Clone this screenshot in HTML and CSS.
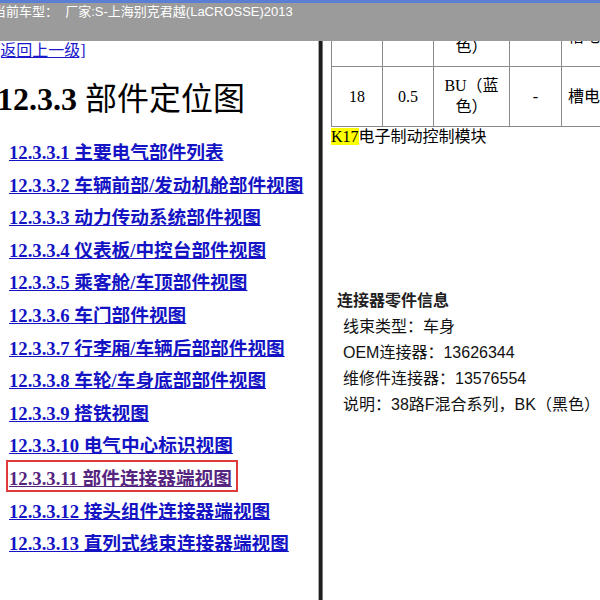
FILE: index.html
```html
<!DOCTYPE html>
<html lang="zh-CN">
<head>
  <meta charset="UTF-8">
  <title>12.3.3 部件定位图</title>
  <link rel="stylesheet" href="styles.css">
</head>
<body>

  <div class="topbar">
    <div class="model">当前车型：&nbsp;&nbsp;厂家:S-上海别克君越(LaCROSSE)2013</div>
  </div>

  <div class="main">
    <div class="left">
      <a class="back" href="#">[返回上一级]</a>
      <h1>12.3.3 <span class="cn">部件定位图</span></h1>
      <ul class="toc">
        <li><a href="#">12.3.3.1 主要电气部件列表</a></li>
        <li><a href="#">12.3.3.2 车辆前部/发动机舱部件视图</a></li>
        <li><a href="#">12.3.3.3 动力传动系统部件视图</a></li>
        <li><a href="#">12.3.3.4 仪表板/中控台部件视图</a></li>
        <li><a href="#">12.3.3.5 乘客舱/车顶部件视图</a></li>
        <li><a href="#">12.3.3.6 车门部件视图</a></li>
        <li><a href="#">12.3.3.7 行李厢/车辆后部部件视图</a></li>
        <li><a href="#">12.3.3.8 车轮/车身底部部件视图</a></li>
        <li><a href="#">12.3.3.9 搭铁视图</a></li>
        <li><a href="#">12.3.3.10 电气中心标识视图</a></li>
        <li class="current"><a href="#">12.3.3.11 部件连接器端视图</a></li>
        <li><a href="#">12.3.3.12 接头组件连接器端视图</a></li>
        <li><a href="#">12.3.3.13 直列式线束连接器端视图</a></li>
      </ul>
    </div>

    <div class="divider"></div>

    <div class="right">
      <table class="pins">
        <colgroup>
          <col class="c-num">
          <col class="c-size">
          <col class="c-color">
          <col class="c-dash">
          <col class="c-desc">
        </colgroup>
        <tr class="tall">
          <td>17</td>
          <td>0.5</td>
          <td class="bottom">BN（棕<br>色）</td>
          <td>-</td>
          <td class="desc">信号电路<br>槽电路信号</td>
        </tr>
        <tr>
          <td>18</td>
          <td>0.5</td>
          <td>BU（蓝<br>色）</td>
          <td>-</td>
          <td class="desc">槽电路信号</td>
        </tr>
      </table>
      <p class="part"><span class="hl">K17</span>电子制动控制模块</p>

      <div class="info">
        <div class="info-title">连接器零件信息</div>
        <div class="info-row">线束类型：车身</div>
        <div class="info-row">OEM连接器：13626344</div>
        <div class="info-row">维修件连接器：13576554</div>
        <div class="info-row">说明：38路F混合系列，BK（黑色）</div>
      </div>
    </div>
  </div>

</body>
</html>
```

FILE: styles.css
```css
html, body { margin: 0; height: 100%; overflow: hidden; }
body { background: #fff; font-family: "Liberation Serif", "Noto Sans CJK SC", serif; color: #000; }

.topbar { height: 38px; background: #9b9b9b; border-top: 3px solid #5a7fd5; overflow: hidden; }
.model { margin-left: -7px; padding-top: 1px; font: 13px/16px "Liberation Sans", "Noto Sans CJK SC", sans-serif; color: #fff; white-space: nowrap; }

.main { display: flex; height: 559px; }
.left { width: 318px; border-right: 1px solid #aaa; overflow: hidden; }
.divider { width: 3px; background: #1e1e1e; }
.right { flex: 1; min-width: 0; border-left: 1px solid #777; padding-left: 8px; overflow: hidden; }

.back { display: block; margin-left: -5px; font-size: 16px; line-height: 20px; color: #1a1acc; white-space: nowrap; }
h1 { margin: 18px 0 0 -3px; font-size: 32px; line-height: 40px; white-space: nowrap; }
h1 .cn { font-weight: normal; }

.toc { list-style: none; margin: 18px 0 0; padding: 0 0 0 9px; }
.toc li { font-size: 14pt; font-weight: bold; line-height: 32.6px; height: 32.6px; white-space: nowrap; }
.toc a { color: #1414c4; }
.toc .current a { padding: 5px 3px 0 0; color: #55257f; outline: 2px solid #e03a3a; outline-offset: 1px; }

.pins { width: 380px; border-collapse: collapse; table-layout: fixed; margin-top: -55px; font-size: 16px; line-height: 21px; }
.pins .c-num, .pins .c-size { width: 51px; }
.pins .c-color { width: 76px; }
.pins .c-dash { width: 52px; }
.pins td { border: 1px solid #8a8a8a; padding: 8px 6px 9px; text-align: center; white-space: nowrap; overflow: hidden; }
.pins .tall td { height: 62px; }
.pins .bottom { vertical-align: bottom; }
.pins .desc { text-align: left; }

.part { margin: 0; font-size: 16px; line-height: 20px; }
.hl { background: #ffff00; }

.info { margin-top: 141px; font: 16px/26px "Liberation Sans", "Noto Sans CJK SC", sans-serif; color: #111; }
.info-title { padding-left: 6px; font-weight: bold; color: #222; }
.info-row { padding-left: 12px; }
```
